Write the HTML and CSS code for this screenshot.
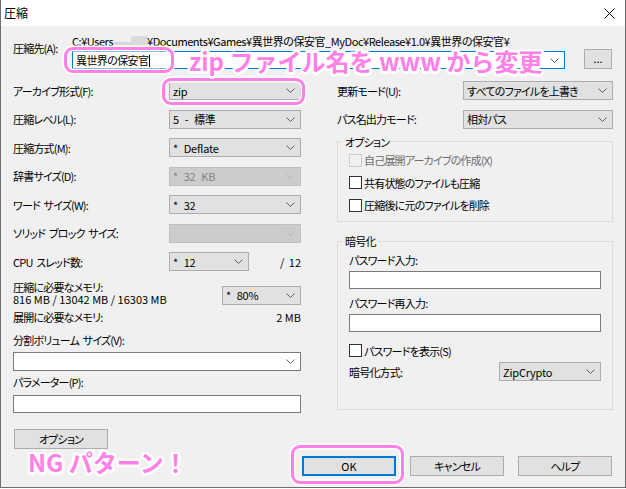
FILE: index.html
```html
<!DOCTYPE html>
<html lang="ja">
<head>
<meta charset="utf-8">
<title>圧縮</title>
<link rel="stylesheet" href="styles.css">
</head>
<body>
<div class="window">
  <div class="titlebar">
    <span class="title">圧縮</span>
    <svg class="close" width="11" height="11" viewBox="0 0 11 11"><path d="M0.5 0.5 L10.5 10.5 M10.5 0.5 L0.5 10.5" stroke="#000" stroke-width="1" fill="none"/></svg>
  </div>
  <div class="content">
    <div class="dest">
      <div class="dest-label">圧縮先(A):</div>
      <div class="dest-main">
        <div class="path">C:¥Users<span class="blur"><span class="blur-a"></span><span class="blur-b"></span></span>¥Documents¥Games¥異世界の保安官_MyDoc¥Release¥1.0¥異世界の保安官¥</div>
        <div class="dest-row">
          <div class="combo edit"><span class="val">異世界の保安官<span class="caret"></span></span><svg class="chev" width="9" height="5" viewBox="0 0 9 5"><path d="M0.5 0.5 L4.5 4.5 L8.5 0.5" fill="none" stroke="currentColor"/></svg></div>
          <div class="btn browse">...</div>
        </div>
      </div>
    </div>

    <div class="cols">
      <div class="col left">
        <div class="row"><span class="lbl">アーカイブ形式(F):</span><div class="combo w132"><span>zip</span><svg class="chev" width="9" height="5" viewBox="0 0 9 5"><path d="M0.5 0.5 L4.5 4.5 L8.5 0.5" fill="none" stroke="currentColor"/></svg></div></div>
        <div class="row"><span class="lbl">圧縮レベル(L):</span><div class="combo w132"><span>5 - 標準</span><svg class="chev" width="9" height="5" viewBox="0 0 9 5"><path d="M0.5 0.5 L4.5 4.5 L8.5 0.5" fill="none" stroke="currentColor"/></svg></div></div>
        <div class="row"><span class="lbl">圧縮方式(M):</span><div class="combo w132"><span>* Deflate</span><svg class="chev" width="9" height="5" viewBox="0 0 9 5"><path d="M0.5 0.5 L4.5 4.5 L8.5 0.5" fill="none" stroke="currentColor"/></svg></div></div>
        <div class="row"><span class="lbl">辞書サイズ(D):</span><div class="combo w132 disabled"><span>* 32 KB</span><svg class="chev" width="9" height="5" viewBox="0 0 9 5"><path d="M0.5 0.5 L4.5 4.5 L8.5 0.5" fill="none" stroke="currentColor"/></svg></div></div>
        <div class="row"><span class="lbl">ワード サイズ(W):</span><div class="combo w132"><span>* 32</span><svg class="chev" width="9" height="5" viewBox="0 0 9 5"><path d="M0.5 0.5 L4.5 4.5 L8.5 0.5" fill="none" stroke="currentColor"/></svg></div></div>
        <div class="row"><span class="lbl">ソリッド ブロック サイズ:</span><div class="combo w132 disabled"><span></span><svg class="chev" width="9" height="5" viewBox="0 0 9 5"><path d="M0.5 0.5 L4.5 4.5 L8.5 0.5" fill="none" stroke="currentColor"/></svg></div></div>
        <div class="row"><span class="lbl">CPU スレッド数:</span><div class="combo w80"><span>* 12</span><svg class="chev" width="9" height="5" viewBox="0 0 9 5"><path d="M0.5 0.5 L4.5 4.5 L8.5 0.5" fill="none" stroke="currentColor"/></svg></div><span class="threads">/ 12</span></div>
        <div class="mem">
          <div class="mem-text">
            <div>圧縮に必要なメモリ:</div>
            <div class="nums">816 MB / 13042 MB / 16303 MB</div>
          </div>
          <div class="combo w79 mem-combo"><span>* 80%</span><svg class="chev" width="9" height="5" viewBox="0 0 9 5"><path d="M0.5 0.5 L4.5 4.5 L8.5 0.5" fill="none" stroke="currentColor"/></svg></div>
        </div>
        <div class="unpack"><span>展開に必要なメモリ:</span><span class="nums">2 MB</span></div>
        <div class="field-label split-label">分割ボリューム サイズ(V):</div>
        <div class="combo white full split"><span></span><svg class="chev" width="9" height="5" viewBox="0 0 9 5"><path d="M0.5 0.5 L4.5 4.5 L8.5 0.5" fill="none" stroke="currentColor"/></svg></div>
        <div class="field-label param-label">パラメーター(P):</div>
        <div class="input full param"></div>
        <div class="btn options">オプション</div>
      </div>

      <div class="col right">
        <div class="row"><span class="lbl rl">更新モード(U):</span><div class="combo w150"><span class="jp">すべてのファイルを上書き</span><svg class="chev" width="9" height="5" viewBox="0 0 9 5"><path d="M0.5 0.5 L4.5 4.5 L8.5 0.5" fill="none" stroke="currentColor"/></svg></div></div>
        <div class="row"><span class="lbl rl">パス名出力モード:</span><div class="combo w150"><span class="jp">相対パス</span><svg class="chev" width="9" height="5" viewBox="0 0 9 5"><path d="M0.5 0.5 L4.5 4.5 L8.5 0.5" fill="none" stroke="currentColor"/></svg></div></div>

        <div class="group g-options">
          <span class="group-title">オプション</span>
          <div class="check disabled first"><span class="box"></span><span>自己展開アーカイブの作成(X)</span></div>
          <div class="check"><span class="box"></span><span>共有状態のファイルも圧縮</span></div>
          <div class="check"><span class="box"></span><span>圧縮後に元のファイルを削除</span></div>
        </div>

        <div class="group g-crypt">
          <span class="group-title">暗号化</span>
          <div class="field-label pw1">パスワード入力:</div>
          <div class="input pw-input"></div>
          <div class="field-label pw2">パスワード再入力:</div>
          <div class="input pw-input"></div>
          <div class="check show-pw"><span class="box"></span><span>パスワードを表示(S)</span></div>
          <div class="method"><span>暗号化方式:</span><div class="combo w102"><span>ZipCrypto</span><svg class="chev" width="9" height="5" viewBox="0 0 9 5"><path d="M0.5 0.5 L4.5 4.5 L8.5 0.5" fill="none" stroke="currentColor"/></svg></div></div>
        </div>
      </div>
    </div>

    <div class="footer">
      <div class="btn dlg ok">OK</div>
      <div class="btn dlg">キャンセル</div>
      <div class="btn dlg">ヘルプ</div>
    </div>
  </div>

  <div class="hl hl-name"></div>
  <div class="hl hl-zip"></div>
  <div class="hl hl-ok"></div>
  <div class="anno anno-top">zip ファイル名を www から変更</div>
  <div class="anno anno-ng">NG パターン！</div>
</div>
</body>
</html>
```
FILE: styles.css
```css
* { box-sizing: border-box; }
html, body { margin: 0; padding: 0; }
html { background: #ffffff; }
body {
  width: 626px;
  height: 489px;
  font-family: "Noto Sans CJK JP", "Noto Sans", sans-serif;
  font-size: 11px;
  line-height: 14px;
  letter-spacing: -0.8px;
  word-spacing: 2px;
  color: #000;
  font-feature-settings: "palt";
  overflow: hidden;
}

.window {
  position: relative;
  width: 626px;
  height: 488px;
  background: #f0f0f0;
  border: 1px solid #6e6e6e;
  border-top: none;
  display: flex;
  flex-direction: column;
}

.titlebar {
  height: 26px;
  background: #fff;
  display: flex;
  align-items: center;
  justify-content: space-between;
  padding: 0 10px 0 3px;
  flex: none;
}
.title { font-size: 12px; letter-spacing: 0; font-feature-settings: normal; }
.close { display: block; }

.content {
  flex: 1;
  padding: 8px 12px 0 12px;
  display: flex;
  flex-direction: column;
}

.nums { letter-spacing: 0; word-spacing: 0; }

/* destination */
.dest { display: flex; }
.dest-label { width: 59px; margin-top: 7px; flex: none; }
.dest-main { flex: 1; }
.path { line-height: 15px; white-space: nowrap; letter-spacing: -0.45px; word-spacing: 0; }
.blur { display: inline-block; width: 34px; height: 12px; position: relative; vertical-align: -2px; }
.blur-a { position: absolute; left: 0; top: 6px; width: 18px; height: 3px; background: #d6d6d6; }
.blur-b { position: absolute; left: 18px; top: 0; width: 16px; height: 11px; background: #dadada; }
.dest-row { display: flex; align-items: flex-end; height: 20px; }
.browse { width: 28px; height: 20px; margin-left: 19px; line-height: 16px; letter-spacing: 0; }

/* combo boxes */
.combo {
  height: 19px;
  display: flex;
  align-items: center;
  justify-content: space-between;
  padding: 0 5px 0 3px;
  background: #e1e1e1;
  border: 1px solid #adadad;
  color: #000;
  flex: none;
  white-space: pre;
  letter-spacing: -0.2px;
  word-spacing: 3.5px;
}
.combo .jp { letter-spacing: -0.8px; }
.combo .chev { color: #606060; flex: none; }
.combo.disabled { background: #cccccc; border-color: #bfbfbf; color: #838383; }
.combo.disabled .chev { color: #b4b4b4; }
.combo.white { background: #fff; border-color: #7a7a7a; }
.combo.edit { width: 493px; height: 18px; background: #fff; border-color: #0078d7; letter-spacing: -0.6px; }
.caret { display: inline-block; width: 1px; height: 12px; background: #000; margin-left: 1px; vertical-align: -2px; }
.w132 { width: 132px; }
.w80 { width: 80px; }
.w79 { width: 79px; }
.w150 { width: 150px; }
.w102 { width: 102px; }
.full { width: 288px; }

.input { height: 18px; background: #fff; border: 1px solid #7a7a7a; }

/* columns */
.cols { display: flex; gap: 36px; margin-top: 12px; }
.col { display: flex; flex-direction: column; }
.left { width: 288px; }
.right { width: 276px; }

.row { display: flex; align-items: center; height: 19px; margin-bottom: 9.5px; }
.lbl { width: 156px; flex: none; }
.lbl.rl { width: 126px; }
.threads { margin-left: auto; letter-spacing: 0; }

.mem { display: flex; justify-content: space-between; align-items: flex-start; }
.mem-text div { line-height: 12px; }
.mem-combo { margin-top: 5px; }
.unpack { display: flex; justify-content: space-between; margin-top: 5.5px; }
.split-label { margin-top: 9px; }
.split { margin-top: 5px; }
.param-label { margin-top: 4px; }
.param { margin-top: 6px; }

.btn {
  background: #e1e1e1;
  border: 1px solid #adadad;
  text-align: center;
  flex: none;
}
.options { width: 94px; height: 20px; margin: 16px 0 0 1px; line-height: 18px; }

/* groups */
.group {
  border: 1px solid #dcdcdc;
  padding: 0 11px;
  display: flex;
  flex-direction: column;
  align-items: flex-start;
}
.group-title {
  background: #f0f0f0;
  padding: 0 2px;
  margin: -7.5px 0 0 -6px;
  line-height: 14px;
}
.g-options { margin-top: 3px; height: 81px; }
.check { display: flex; align-items: center; height: 14px; margin-top: 8.5px; }
.check.first { margin-top: 4.5px; }
.check .box { width: 13px; height: 13px; border: 1px solid #333; background: #fff; margin-right: 2px; flex: none; }
.check.disabled { color: #6d6d6d; }
.check.disabled .box { border-color: #cccccc; background: transparent; }

.g-crypt { margin-top: 18.5px; height: 169px; }
.pw1 { margin-top: 4.5px; }
.pw-input { width: 252px; margin-top: 4px; }
.pw2 { margin-top: 7px; }
.show-pw { margin-top: 12px; }
.method { display: flex; align-items: center; justify-content: space-between; width: 252px; margin-top: 4.5px; }

/* footer */
.footer { display: flex; justify-content: flex-end; gap: 14px; padding-right: 1px; margin-top: 7px; }
.dlg { width: 94px; height: 20px; line-height: 18px; }
.ok { border: 2px solid #0078d7; line-height: 16px; letter-spacing: 0; }

/* annotations */
.hl {
  position: absolute;
  border: 3px solid #ff80e6;
  border-radius: 9px;
  box-shadow: 0 0 0 1.5px #fff, inset 0 0 0 1.5px #fff;
}
.hl-name { left: 63px; top: 47px; width: 110px; height: 26px; }
.hl-zip { left: 161px; top: 78px; width: 143px; height: 27px; }
.hl-ok { left: 290px; top: 445px; width: 113px; height: 39px; }

.anno {
  position: absolute;
  font-size: 24px;
  line-height: 24px;
  font-weight: 700;
  letter-spacing: 0;
  word-spacing: 0;
  color: #ff80e6;
  white-space: nowrap;
  font-feature-settings: normal;
  text-shadow:
    2.5px 0 0 #fff, -2.5px 0 0 #fff, 0 2.5px 0 #fff, 0 -2.5px 0 #fff,
    1.8px 1.8px 0 #fff, -1.8px 1.8px 0 #fff, 1.8px -1.8px 0 #fff, -1.8px -1.8px 0 #fff,
    2.3px 1px 0 #fff, -2.3px 1px 0 #fff, 2.3px -1px 0 #fff, -2.3px -1px 0 #fff,
    1px 2.3px 0 #fff, -1px 2.3px 0 #fff, 1px -2.3px 0 #fff, -1px -2.3px 0 #fff;
}
.anno-top { left: 188px; top: 49px; }
.anno-ng { left: 27px; top: 450px; }
```
